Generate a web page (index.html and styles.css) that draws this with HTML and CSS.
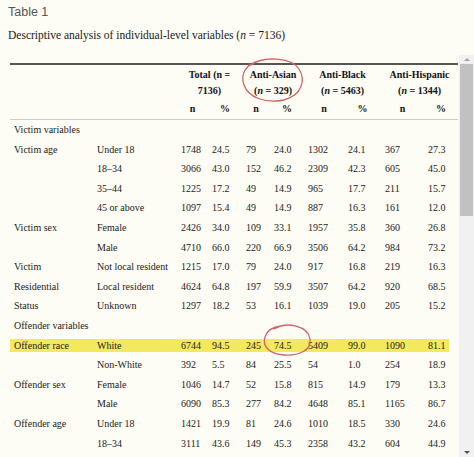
FILE: index.html
```html
<!DOCTYPE html>
<html lang="en">

<head>
    <meta charset="UTF-8">
    <meta name="viewport" content="width=device-width, initial-scale=1.0">
    <title>Table 1</title>
    <link rel="stylesheet" href="styles.css">
</head>
<body>

    <div class="table-label">Table 1</div>
    <div class="table-title">Descriptive analysis of individual-level variables (<i>n</i> = 7136)</div>

    <div class="table-scroll">
        <div class="sheet">
            <table class="data">
                <colgroup>
                    <col style="width: 83px">
                    <col style="width: 84px">
                    <col style="width: 31px">
                    <col style="width: 34px">
                    <col style="width: 28px">
                    <col style="width: 34px">
                    <col style="width: 40px">
                    <col style="width: 37px">
                    <col style="width: 43px">
                    <col style="width: 34px">
                </colgroup>
                <thead>
                    <tr class="group-row">
                        <th></th>
                        <th></th>
                        <th colspan="2">Total (n =<br>7136)</th>
                        <th colspan="2">Anti-Asian<br>(<i>n</i> = 329)</th>
                        <th colspan="2">Anti-Black<br>(<i>n</i> = 5463)</th>
                        <th colspan="2">Anti-Hispanic<br>(<i>n</i> = 1344)</th>
                    </tr>
                    <tr class="unit-row">
                        <th></th>
                        <th></th>
                        <th>n</th><th>%</th>
                        <th>n</th><th>%</th>
                        <th>n</th><th>%</th>
                        <th>n</th><th>%</th>
                    </tr>
                </thead>
                <tbody>
                    <tr><td colspan="10">Victim variables</td></tr>
                    <tr><td>Victim age</td><td>Under 18</td><td>1748</td><td>24.5</td><td>79</td><td>24.0</td><td>1302</td><td>24.1</td><td>367</td><td>27.3</td></tr>
                    <tr><td></td><td>18–34</td><td>3066</td><td>43.0</td><td>152</td><td>46.2</td><td>2309</td><td>42.3</td><td>605</td><td>45.0</td></tr>
                    <tr><td></td><td>35–44</td><td>1225</td><td>17.2</td><td>49</td><td>14.9</td><td>965</td><td>17.7</td><td>211</td><td>15.7</td></tr>
                    <tr><td></td><td>45 or above</td><td>1097</td><td>15.4</td><td>49</td><td>14.9</td><td>887</td><td>16.3</td><td>161</td><td>12.0</td></tr>
                    <tr><td>Victim sex</td><td>Female</td><td>2426</td><td>34.0</td><td>109</td><td>33.1</td><td>1957</td><td>35.8</td><td>360</td><td>26.8</td></tr>
                    <tr><td></td><td>Male</td><td>4710</td><td>66.0</td><td>220</td><td>66.9</td><td>3506</td><td>64.2</td><td>984</td><td>73.2</td></tr>
                    <tr><td>Victim</td><td>Not local resident</td><td>1215</td><td>17.0</td><td>79</td><td>24.0</td><td>917</td><td>16.8</td><td>219</td><td>16.3</td></tr>
                    <tr><td>Residential</td><td>Local resident</td><td>4624</td><td>64.8</td><td>197</td><td>59.9</td><td>3507</td><td>64.2</td><td>920</td><td>68.5</td></tr>
                    <tr><td>Status</td><td>Unknown</td><td>1297</td><td>18.2</td><td>53</td><td>16.1</td><td>1039</td><td>19.0</td><td>205</td><td>15.2</td></tr>
                    <tr><td colspan="10">Offender variables</td></tr>
                    <tr class="marked"><td>Offender race</td><td>White</td><td>6744</td><td>94.5</td><td>245</td><td>74.5</td><td>5409</td><td>99.0</td><td>1090</td><td>81.1</td></tr>
                    <tr><td></td><td>Non-White</td><td>392</td><td>5.5</td><td>84</td><td>25.5</td><td>54</td><td>1.0</td><td>254</td><td>18.9</td></tr>
                    <tr><td>Offender sex</td><td>Female</td><td>1046</td><td>14.7</td><td>52</td><td>15.8</td><td>815</td><td>14.9</td><td>179</td><td>13.3</td></tr>
                    <tr><td></td><td>Male</td><td>6090</td><td>85.3</td><td>277</td><td>84.2</td><td>4648</td><td>85.1</td><td>1165</td><td>86.7</td></tr>
                    <tr><td>Offender age</td><td>Under 18</td><td>1421</td><td>19.9</td><td>81</td><td>24.6</td><td>1010</td><td>18.5</td><td>330</td><td>24.6</td></tr>
                    <tr><td></td><td>18–34</td><td>3111</td><td>43.6</td><td>149</td><td>45.3</td><td>2358</td><td>43.2</td><td>604</td><td>44.9</td></tr>
                </tbody>
            </table>

            <!-- pen marks drawn over the table -->
            <svg class="pen-mark mark-header" width="70" height="52" viewBox="236 0 70 52">
                <path d="M 251 10 C 263 1, 291 2, 299 14 C 306 25, 302 40, 284 45 C 265 49, 248 42, 244 30 C 240 19, 246 9, 259 6" />
            </svg>
            <svg class="pen-mark mark-cell" width="60" height="40" viewBox="258 266 60 40">
                <path d="M 274 274 C 287 266, 308 271, 310 284 C 312 295, 299 301, 284 300 C 269 299, 262 291, 265 282 C 267 275, 272 272, 281 271" />
            </svg>
        </div>

        <div class="scrollbar">
            <span class="arrow up"></span>
            <div class="thumb"></div>
            <span class="track-rest"></span>
            <span class="arrow down"></span>
        </div>
    </div>

</body>

</html>
```

FILE: styles.css
```css
body {
    margin: 0;
    background-color: #fdfcf5;
    color: #222;
    font-family: 'Liberation Serif', 'Times New Roman', serif;
}

.table-label {
    padding: 5px 8px 0;
    font-family: 'Liberation Sans', Arial, sans-serif;
    font-size: 12.5px;
    line-height: 15px;
    color: #555;
}

.table-title {
    margin-top: 8px;
    padding-left: 8px;
    font-size: 11.5px;
    line-height: 14px;
    color: #1a1a1a;
}

.table-scroll {
    display: flex;
    margin-top: 13px;
    height: 402px;
    overflow: hidden;
}

.sheet {
    position: relative;
    flex: 1;
    padding: 8px 0 0 10px;
}

table.data {
    width: 448px;
    table-layout: fixed;
    border-collapse: collapse;
    border-top: 2px solid #555;
    font-size: 10px;
}

.data th {
    padding: 0;
    font-weight: bold;
    text-align: center;
    color: #111;
}

.group-row th {
    padding-top: 2px;
    line-height: 16px;
}

.unit-row th {
    height: 20px;
    line-height: 20px;
    border-bottom: 1px solid #ccc;
}

.data td {
    height: 19.6px;
    padding: 0 0 0 4px;
    line-height: 19.6px;
    white-space: nowrap;
    text-align: left;
}

/* highlighter stroke across the offender race row */
tr.marked td {
    background-image: linear-gradient(transparent 3px, #f2e95e 3px, #f2e95e 16px, transparent 16px);
    background-repeat: no-repeat;
}

tr.marked td:last-child {
    background-size: 25px 100%;
}

.pen-mark {
    position: absolute;
    overflow: visible;
}

.pen-mark path {
    fill: none;
    stroke: #cf6467;
    stroke-width: 1.3;
    stroke-linecap: round;
}

.mark-header {
    left: 236px;
    top: 0;
}

.mark-cell {
    left: 258px;
    top: 266px;
}

/* classic browser scrollbar, thumb at the top */
.scrollbar {
    display: flex;
    flex-direction: column;
    flex: none;
    width: 15px;
    background-color: #f1f1f1;
}

.arrow {
    display: flex;
    justify-content: center;
    align-items: center;
    height: 9px;
}

.arrow::before {
    content: '';
    border-left: 3px solid transparent;
    border-right: 3px solid transparent;
}

.arrow.up::before {
    border-bottom: 3px solid #a3a3a3;
}

.arrow.down::before {
    border-top: 3px solid #505050;
}

.thumb {
    height: 152px;
    margin: 0 1px;
    background-color: #c1c1c1;
}

.track-rest {
    flex: 1;
}
```
